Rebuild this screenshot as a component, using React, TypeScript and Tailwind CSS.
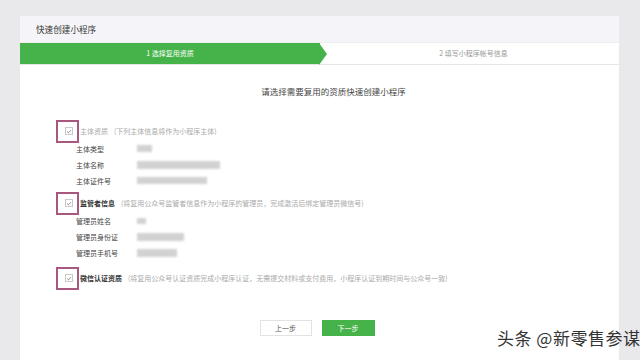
import React from "react";

const font = { fontFamily: '"Noto Sans CJK SC", "Noto Sans", sans-serif' };

const Check = () => (
  <div className="w-[23px] h-[23px] border-2 border-[#a8587e] flex items-center pl-[7px] shrink-0">
    <div className="w-[8px] h-[8px] border border-[#c8c8c8] bg-white flex items-center justify-center">
      <svg viewBox="0 0 8 8" className="w-[7px] h-[7px]">
        <path d="M1.5 4.2 L3.3 5.8 L6.5 2.3" fill="none" stroke="#666" strokeWidth="1" />
      </svg>
    </div>
  </div>
);

const Row = ({ label, value }: { label: string; value: React.ReactNode }) => (
  <div className="h-[12px] flex items-center pl-[56px]">
    <div className="w-[61px] text-[7px] text-[#444]">{label}</div>
    {value}
  </div>
);

const Blur = ({ w, h = 7 }: { w: number; h?: number }) => (
  <div
    className="bg-[#d2d2d2] blur-[0.8px]"
    style={{ width: w, height: h }}
  />
);

const Section = ({
  title,
  desc,
  muted,
  gap,
}: {
  title: string;
  desc: string;
  muted?: boolean;
  gap: number;
}) => (
  <div className="flex items-center pl-[36px]" style={{ marginTop: gap }}>
    <Check />
    <span
      className={
        "text-[7px] ml-[1px] " + (muted ? "text-[#aaa]" : "text-[#333] font-bold")
      }
    >
      {title}
    </span>
    <span className="text-[7px] text-[#aaa] ml-[6px] whitespace-nowrap">{desc}</span>
  </div>
);

export default function App() {
  return (
    <div
      className="w-[640px] h-[360px] bg-[#e9e9eb] pt-[16px] pl-[20px] pr-[21px] overflow-hidden relative"
      style={font}
    >
      <div className="bg-white h-full flex flex-col">
        {/* header */}
        <div className="h-[27px] bg-[#f5f5f9] flex items-center pl-[16px] text-[8.6px] text-[#333] border-b border-[#eee]">
          快速创建小程序
        </div>

        {/* steps */}
        <div className="h-[22px] flex border-b border-[#e6e6e6]">
          <div className="w-[300px] bg-[#46b34a] relative flex items-center justify-center text-[7px] text-white">
            1 选择复用资质
            <svg
              viewBox="0 0 8 22"
              preserveAspectRatio="none"
              className="absolute right-[-7px] top-0 w-[8px] h-[22px]"
            >
              <path d="M0 0 L8 11 L0 22 Z" fill="#46b34a" />
            </svg>
          </div>
          <div className="flex-1 flex items-center justify-center text-[7px] text-[#999] pl-[8px]">
            2 填写小程序帐号信息
          </div>
        </div>

        {/* title */}
        <div className="mt-[20px] pl-[28px] text-center text-[8.5px] text-[#444]">
          请选择需要复用的资质快速创建小程序
        </div>

        <Section
          gap={22}
          muted
          title="主体资质"
          desc="(下列主体信息将作为小程序主体)"
        />
        <div className="flex flex-col gap-[4px]">
          <Row label="主体类型" value={<Blur w={15} />} />
          <Row label="主体名称" value={<Blur w={83} h={8} />} />
          <Row label="主体证件号" value={<Blur w={70} />} />
        </div>

        <Section
          gap={5}
          title="监管者信息"
          desc="(将复用公众号监管者信息作为小程序的管理员，完成激活后绑定管理员微信号)"
        />
        <div className="flex flex-col gap-[4px]">
          <Row label="管理员姓名" value={<Blur w={9} h={6} />} />
          <Row label="管理员身份证" value={<Blur w={47} h={8} />} />
          <Row label="管理员手机号" value={<Blur w={40} h={8} />} />
        </div>

        <Section
          gap={8}
          title="微信认证资质"
          desc="(将复用公众号认证资质完成小程序认证，无需提交材料或支付费用，小程序认证到期时间与公众号一致)"
        />

        {/* buttons */}
        <div className="flex justify-center gap-[10px] mt-[30px] pr-[5px]">
          <button className="w-[52px] h-[16px] border border-[#e3e3e3] bg-white text-[7px] text-[#555] flex items-center justify-center">
            上一步
          </button>
          <button className="w-[53px] h-[16px] bg-[#46b34a] text-[7px] text-white flex items-center justify-center">
            下一步
          </button>
        </div>
      </div>

      {/* watermark */}
      <div className="absolute left-[497px] top-[325px] text-[17px] text-[#333] tracking-[0.5px] whitespace-nowrap">
        头条 @新零售参谋
      </div>
    </div>
  );
}
